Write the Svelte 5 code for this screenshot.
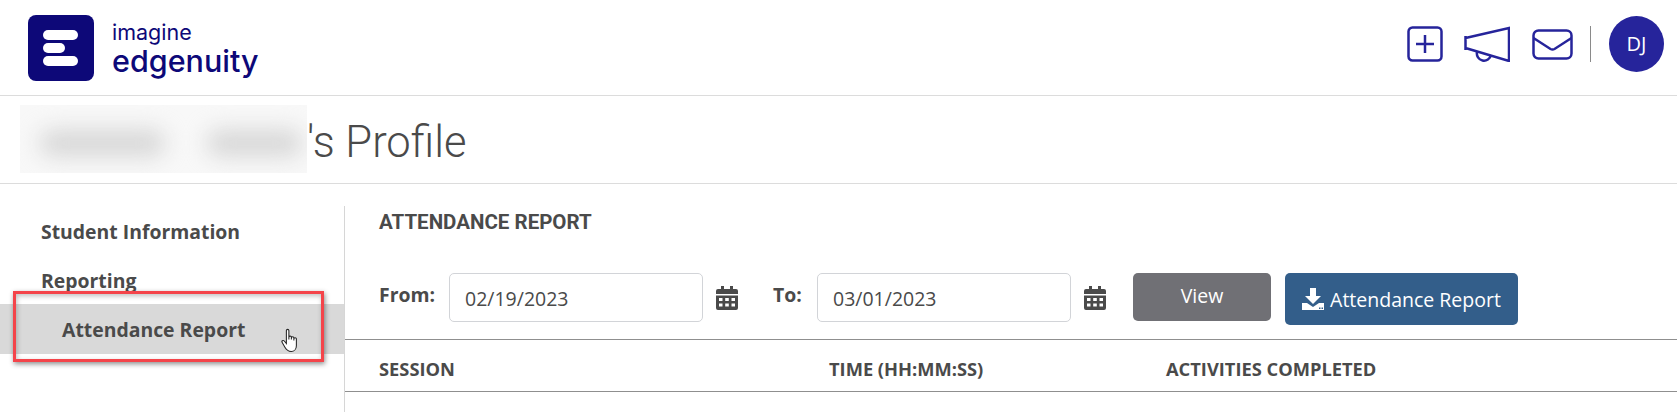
<script>
  const navItems = ['Student Information', 'Reporting'];
  const columns = [
    { label: 'SESSION', width: 450 },
    { label: 'TIME (HH:MM:SS)', width: 337 },
    { label: 'ACTIVITIES COMPLETED', width: 300 }
  ];
  const dates = [
    { label: 'From:', value: '02/19/2023' },
    { label: 'To:', value: '03/01/2023' }
  ];
</script>

<div class="page">
  <header class="topbar">
    <div class="brand">
      <svg class="logo" viewBox="0 0 66 66" width="66" height="66">
        <rect width="66" height="66" rx="8" fill="#0d0878" />
        <rect x="15" y="15" width="35" height="10" rx="5" fill="#fff" />
        <rect x="15" y="28" width="22" height="10" rx="5" fill="#fff" />
        <rect x="15" y="41" width="35" height="10" rx="5" fill="#fff" />
      </svg>
      <div class="wordmark">
        <span class="imagine">imagine</span>
        <span class="edgenuity">edgenuity</span>
      </div>
    </div>
    <div class="actions">
      <svg viewBox="0 0 36 36" width="36" height="36" fill="none" stroke="#26249b" stroke-width="2.500">
        <rect x="1.500" y="1.500" width="33" height="33" rx="4" />
        <path d="M18 9v18M9 18h18" />
      </svg>
      <svg class="horn" viewBox="0 0 46 36" width="46" height="36" fill="none" stroke="#26249b" stroke-width="2.500">
        <path d="M1.500 10v14M1.500 12L45 2v33L1.500 22" />
        <path d="M13 26a7 7 0 0 0 14 3" />
      </svg>
      <svg class="mail" viewBox="0 0 41 31" width="41" height="31" fill="none" stroke="#26249b" stroke-width="2.500">
        <rect x="1.500" y="1.500" width="38" height="28" rx="5" />
        <path d="M1.500 9l17 11q2 1 4 0l17-11" />
      </svg>
      <span class="divider"></span>
      <span class="avatar">DJ</span>
    </div>
  </header>

  <div class="profile-title">
    <h1><span class="redacted"><i></i><i></i></span><span class="owner">'s Profile</span></h1>
  </div>

  <div class="content">
    <aside class="sidebar">
      {#each navItems as item}
        <div class="nav-item">{item}</div>
      {/each}
      <div class="nav-sub">Attendance Report</div>
      <div class="callout"></div>
      <svg class="hand" viewBox="0 0 16 24" width="17" height="25" fill="#fff" stroke="#222" stroke-width="1">
        <path d="M5 2.500a1.200 1.200 0 0 1 2.400 0V11V9a1.200 1.200 0 0 1 2.400 0v2V9.500a1.200 1.200 0 0 1 2.400 0V12v-1.500a1.200 1.200 0 0 1 2.400 0V17c0 3-2 5.500-5 5.500-3.500 0-4.500-1.500-6-4L1 14c-1-1.500.8-2.800 2-1.500L5 15z" />
      </svg>
    </aside>

    <main class="report">
      <h2>ATTENDANCE REPORT</h2>
      <div class="filters">
        {#each dates as d}
          <label class="date-label" for={d.label}>{d.label}</label>
          <input id={d.label} class="date-input" type="text" value={d.value} />
          <svg class="cal" viewBox="0 0 22 24" width="22" height="24" fill="#4a4a4a">
            <path fill-rule="evenodd" d="M5 0h3v3h6V0h3v3h3a2 2 0 0 1 2 2v3H0V5a2 2 0 0 1 2-2h3zM0 9.500h22V22a2 2 0 0 1-2 2H2a2 2 0 0 1-2-2zM3 12v3h3.500v-3zM9.200 12v3h3.600v-3zM15.500 12v3H19v-3zM3 17.500v3h3.500v-3zM9.200 17.500v3h3.600v-3zM15.500 17.500v3H19v-3z" />
          </svg>
        {/each}
        <button class="btn view">View</button>
        <button class="btn download">
          <svg viewBox="0 0 22 22" width="22" height="22" fill="#fff">
            <path fill-rule="evenodd" d="M8 0h6v8h5l-8 8-8-8h5zM0 15h5l6 4 6-4h5v7H0zM17 19.500h1.500V21H17zM19.500 19.500H21V21h-1.500z" />
          </svg>
          Attendance Report
        </button>
      </div>
      <div class="table-head">
        {#each columns as col}
          <span style="width: {col.width}px">{col.label}</span>
        {/each}
      </div>
    </main>
  </div>
</div>

<style>
  :global(body) {
    margin: 0;
    background: #fff;
  }

  .page {
    height: 412px;
    overflow: hidden;
    color: #4a4a4a;
    font-family: "Open Sans", "Liberation Sans", sans-serif;
  }

  /* Top bar */
  .topbar {
    display: flex;
    justify-content: space-between;
    align-items: center;
    height: 95px;
    padding: 0 13px 0 28px;
    border-bottom: 1px solid #dcdcdc;
  }

  .brand {
    display: flex;
    align-items: center;
    gap: 18px;
  }

  .logo {
    display: block;
  }

  .wordmark {
    display: flex;
    flex-direction: column;
    color: #0d0878;
    font-family: Inter, sans-serif;
    padding-top: 2px;
  }

  .imagine {
    font-size: 21.500px;
    line-height: 24px;
    font-weight: 400;
  }

  .edgenuity {
    font-size: 30.500px;
    line-height: 34px;
    font-weight: 500;
  }

  .actions {
    display: flex;
    align-items: center;
    padding-bottom: 8px;
  }

  .horn {
    margin-left: 21px;
  }

  .mail {
    margin: 2px 0 0 22px;
  }

  .divider {
    width: 1px;
    height: 36px;
    background: #8a8a8a;
    margin: 0 18px 0 17px;
  }

  .avatar {
    display: flex;
    align-items: center;
    justify-content: center;
    width: 55px;
    height: 56px;
    border-radius: 50%;
    background: #26249b;
    color: #fff;
    font-size: 20px;
  }

  /* Profile heading */
  .profile-title {
    height: 87px;
    padding-left: 20px;
    border-bottom: 1px solid #dcdcdc;
  }

  h1 {
    display: flex;
    align-items: center;
    margin: 0;
    padding-top: 9px;
    height: 68px;
    font-family: Roboto, sans-serif;
    font-weight: 300;
    font-size: 43.500px;
    color: #4a4a4a;
  }

  .owner {
    padding-top: 6px;
  }

  .redacted {
    display: flex;
    align-items: center;
    gap: 42px;
    width: 287px;
    height: 68px;
    padding: 8px 0 0 20px;
    box-sizing: border-box;
    background: #f8f8f8;
    overflow: hidden;
  }

  .redacted i {
    display: block;
    height: 26px;
    width: 125px;
    background: #d6d6d6;
    border-radius: 12px;
    filter: blur(11px);
  }

  .redacted i:nth-child(2) {
    width: 95px;
  }

  /* Body */
  .content {
    display: flex;
    margin-top: 22px;
  }

  .sidebar {
    position: relative;
    width: 345px;
    height: 206px;
    border-right: 1px solid #d6d6d6;
    font-weight: 700;
    font-size: 19.400px;
    flex-shrink: 0;
    padding-top: 2px;
    box-sizing: border-box;
  }

  .nav-item {
    height: 48px;
    line-height: 48px;
    padding-left: 41px;
  }

  .nav-item + .nav-item {
    line-height: 50px;
  }

  .nav-sub {
    height: 50px;
    line-height: 52px;
    padding-left: 62px;
    background: #d9d9d9;
  }

  .callout {
    position: absolute;
    left: 13px;
    top: 85px;
    width: 311px;
    height: 71px;
    box-sizing: border-box;
    border: 3px solid #f4444a;
    box-shadow: 1px 2px 5px rgba(0, 0, 0, 0.45), inset 1px 2px 5px rgba(0, 0, 0, 0.25);
  }

  .hand {
    position: absolute;
    left: 281px;
    top: 122px;
  }

  .report {
    flex: 1;
  }

  h2 {
    margin: 0;
    padding-left: 34px;
    height: 30px;
    line-height: 32px;
    font-family: Roboto, sans-serif;
    font-size: 20.500px;
    font-weight: 700;
  }

  .filters {
    display: flex;
    align-items: flex-start;
    padding: 37px 0 0 34px;
    height: 66px;
    box-sizing: content-box;
    border-bottom: 1px solid #8f8f8f;
  }

  .date-label {
    font-weight: 700;
    font-size: 19.400px;
    line-height: 44px;
    width: 70px;
  }

  .date-label:nth-of-type(2) {
    width: 44px;
  }

  .date-input {
    width: 254px;
    height: 49px;
    box-sizing: border-box;
    padding: 2px 15px 0;
    border: 1px solid #d2d4d8;
    border-radius: 5px;
    font: 400 19.500px "Open Sans", sans-serif;
    color: #4a4a4a;
    outline: none;
  }

  .cal {
    margin: 13px 35px 0 13px;
    flex-shrink: 0;
  }

  .cal:last-of-type {
    margin-right: 27px;
  }

  .btn {
    border: 0;
    color: #fff;
    font: 400 19.500px "Open Sans", sans-serif;
    border-radius: 5px;
    padding: 0;
  }

  .view {
    width: 138px;
    height: 48px;
    background: #707075;
    padding-bottom: 4px;
    margin-right: 14px;
  }

  .download {
    display: flex;
    align-items: center;
    justify-content: center;
    gap: 6px;
    width: 233px;
    height: 52px;
    background: #335e8a;
  }

  .table-head {
    display: flex;
    padding: 5px 0 0 34px;
    height: 46px;
    line-height: 48px;
    border-bottom: 1px solid #8f8f8f;
    font-size: 18.300px;
    font-weight: 700;
  }
</style>
